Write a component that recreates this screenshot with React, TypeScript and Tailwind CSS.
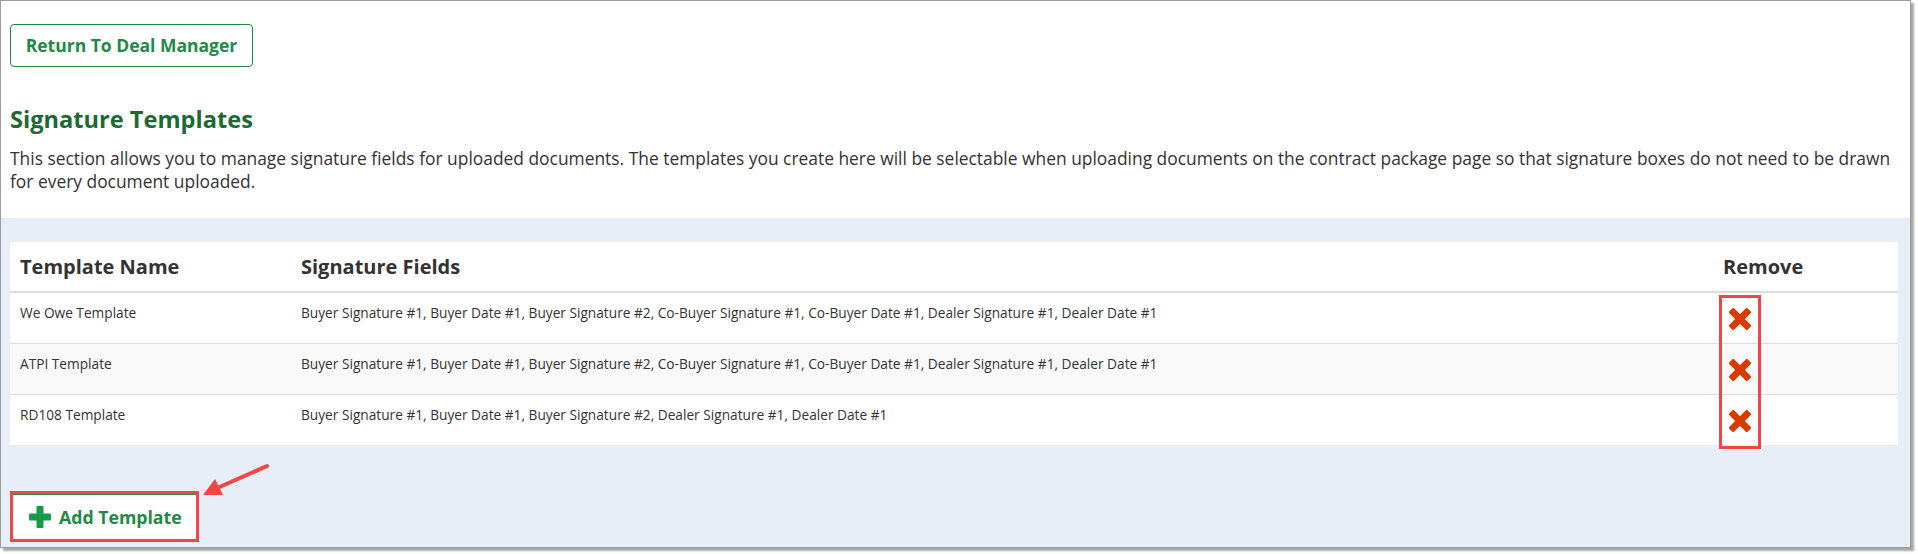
import React from 'react';

interface Template {
  name: string;
  fields: string;
}

const templates: Template[] = [
  {
    name: 'We Owe Template',
    fields:
      'Buyer Signature #1, Buyer Date #1, Buyer Signature #2, Co-Buyer Signature #1, Co-Buyer Date #1, Dealer Signature #1, Dealer Date #1',
  },
  {
    name: 'ATPI Template',
    fields:
      'Buyer Signature #1, Buyer Date #1, Buyer Signature #2, Co-Buyer Signature #1, Co-Buyer Date #1, Dealer Signature #1, Dealer Date #1',
  },
  {
    name: 'RD108 Template',
    fields: 'Buyer Signature #1, Buyer Date #1, Buyer Signature #2, Dealer Signature #1, Dealer Date #1',
  },
];

const RemoveIcon: React.FC = () => (
  <svg width="22" height="22" viewBox="0 0 22 22">
    <g fill="#d93a00" transform="rotate(45 11 11)">
      <rect x="7.5" y="-2" width="7" height="26" rx="1.5" />
      <rect x="-2" y="7.5" width="26" height="7" rx="1.5" />
    </g>
  </svg>
);

const PlusIcon: React.FC = () => (
  <svg width="22" height="22" viewBox="0 0 22 22">
    <g fill="#169c46">
      <rect x="7.5" y="0" width="7" height="22" rx="1" />
      <rect x="0" y="7.5" width="22" height="7" rx="1" />
    </g>
  </svg>
);

const App: React.FC = () => {
  return (
    <div className="w-[1918px] h-[554px] bg-white font-['Open_Sans',sans-serif]">
      <div className="relative w-[1911px] h-[548px] border border-[#9c9c9c] shadow-[3px_3px_2px_rgba(0,0,0,0.35)] flex flex-col overflow-hidden">
        <div className="pl-[9px] pr-[4px] pt-[23px] pb-[25px] bg-white">
          <button className="h-[43px] w-[243px] border border-[#1f8a45] rounded-[4px] text-[#1f8a45] font-bold text-[17.5px] bg-white">
            Return To Deal Manager
          </button>
          <h2 className="mt-[38px] text-[23.6px] leading-[29px] font-bold text-[#1c6a32]">Signature Templates</h2>
          <p className="mt-[13px] text-[17.4px] leading-[23px] text-[#333]">
            This section allows you to manage signature fields for uploaded documents. The templates you create here
            will be selectable when uploading documents on the contract package page so that signature boxes do not
            need to be drawn for every document uploaded.
          </p>
        </div>

        <div className="flex-1 bg-[#e7eef7] px-[9px] pt-[24px]">
          <table className="w-[1888px] bg-white border-collapse text-[#333]">
            <thead>
              <tr className="h-[50px] border-b-2 border-[#dddddd]">
                <th className="w-[281px] pl-[10px] text-left text-[20px] font-bold">Template Name</th>
                <th className="pl-[10px] text-left text-[20px] font-bold">Signature Fields</th>
                <th className="w-[185px] pl-[10px] text-left text-[20px] font-bold">Remove</th>
              </tr>
            </thead>
            <tbody>
              {templates.map((t, i) => (
                <tr
                  key={t.name}
                  className={`h-[51px] border-t border-[#dddddd] ${i % 2 === 1 ? 'bg-[#f9f9f9]' : 'bg-white'}`}
                >
                  <td className="pl-[10px] align-top pt-[10px] text-[13.7px] leading-[20px]">{t.name}</td>
                  <td className="pl-[10px] align-top pt-[10px] text-[13.7px] leading-[20px]">{t.fields}</td>
                  <td className="pl-[16px] align-top pt-[15px]">
                    <RemoveIcon />
                  </td>
                </tr>
              ))}
            </tbody>
          </table>

          <div className="mt-[46px] inline-flex border-[3px] border-[#f04646]">
            <button className="h-[45px] w-[183px] bg-white border-t border-[#1f8a45] flex items-center gap-[8px] pl-[16px] text-[17.7px] font-bold text-[#1f8a45]">
              <PlusIcon />
              Add Template
            </button>
          </div>
        </div>

        {/* annotation: highlight around the remove icons */}
        <div className="absolute left-[1718px] top-[294px] w-[42px] h-[154px] border-[3px] border-[#f04646]" />

        {/* annotation: arrow pointing at Add Template */}
        <svg className="absolute left-0 top-0 pointer-events-none" width="1911" height="548">
          <line x1="266" y1="465" x2="214" y2="488" stroke="#f04646" strokeWidth="4" strokeLinecap="round" />
          <polygon points="202,494 214,478 222,494" fill="#f04646" />
        </svg>
      </div>
    </div>
  );
};

export default App;
